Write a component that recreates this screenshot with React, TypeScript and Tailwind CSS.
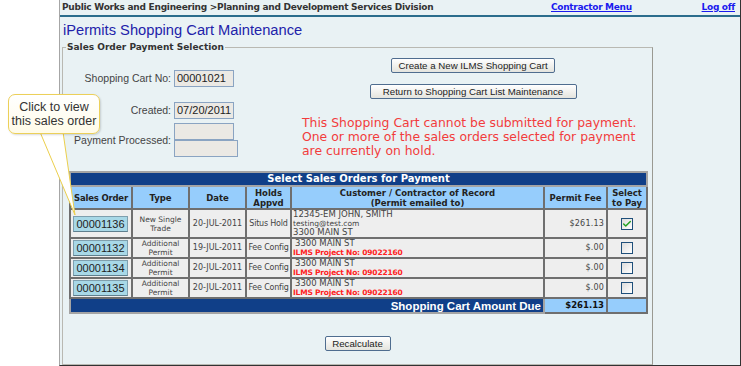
import { Check } from 'lucide-react'

// rows of the sales order table
const orders = [
  {
    id: '00001136',
    type: ['New Single', 'Trade'],
    date: '20-JUL-2011',
    hold: 'Situs Hold',
    fee: '$261.13',
    checked: true,
    first: true,
  },
  { id: '00001132', type: ['Additional', 'Permit'], date: '19-JUL-2011', hold: 'Fee Config', fee: '$.00', checked: false },
  { id: '00001134', type: ['Additional', 'Permit'], date: '20-JUL-2011', hold: 'Fee Config', fee: '$.00', checked: false },
  { id: '00001135', type: ['Additional', 'Permit'], date: '20-JUL-2011', hold: 'Fee Config', fee: '$.00', checked: false },
]

function Field({ value, w = 'w-[60px]' }: { value?: string; w?: string }) {
  return (
    <div
      className={`${w} h-[17px] border border-[#8aa4c2] bg-[#ebe9e4] px-[2px] text-[11px] leading-[15px] text-[#222]`}>
      {value}
    </div>
  )
}

function Btn({ children, w }: { children: React.ReactNode; w: string }) {
  return (
    <button
      className={`${w} block h-[15px] rounded-[2px] border border-[#4f6d8f] bg-gradient-to-b from-white to-[#e4e4de] text-[9.7px] leading-[13px] text-[#222]`}>
      {children}
    </button>
  )
}

function Box({ checked }: { checked: boolean }) {
  return (
    <span className="mx-auto flex h-[12px] w-[12px] items-center justify-center border border-[#1f4f7a] bg-gradient-to-br from-[#dcdcdc] to-white">
      {checked && <Check className="h-[10px] w-[10px] text-[#21a121]" strokeWidth={3.5} />}
    </span>
  )
}

export default function App() {
  const cell = 'border-2 border-[#6f6f6f]'
  return (
    <div className="relative flex h-[366px] w-[741px] overflow-hidden bg-white font-['Liberation_Sans',Arial,sans-serif] text-[#333]">
      <div className="w-[59px] shrink-0" />

      <div className="flex min-w-0 flex-1 flex-col border-b border-l border-r border-b-[#333] border-l-[#a6a6a6] border-r-[#333] bg-[#e9f2f4]">
        {/* top strip */}
        <div className="flex h-[17px] shrink-0 items-center border-b-2 border-[#2b6d8c] pl-[2px] pr-[5px] font-['DejaVu_Sans',sans-serif] text-[9px] font-bold">
          <span className="w-[489px] tracking-[-0.25px] text-[#333]">
            Public Works and Engineering &gt;Planning and Development Services Division
          </span>
          <a href="#" className="tracking-[-0.3px] text-[#1a1aee] underline">
            Contractor Menu
          </a>
          <a href="#" className="ml-auto tracking-[-0.3px] text-[#1a1aee] underline">
            Log off
          </a>
        </div>

        <h1 className="mt-[3px] h-[20px] shrink-0 pl-[3px] text-[14.7px] leading-[20px] text-[#2222aa]">
          iPermits Shopping Cart Maintenance
        </h1>

        <fieldset className="ml-[2px] mt-[2px] min-h-0 w-[591px] flex-1 border border-[#b9b9b2] border-r-[#9a9a92]">
          <legend className="ml-[3px] px-[1px] font-['DejaVu_Sans',sans-serif] text-[9px] font-bold leading-[10px] text-[#333]">
            Sales Order Payment Selection
          </legend>

          <div className="flex">
            {/* left form */}
            <div className="w-[237px] shrink-0 text-[10.5px] text-[#444]">
              <div className="mt-[18px] flex h-[17px] items-center">
                <span className="w-[108px] text-right">Shopping Cart No:</span>
                <div className="ml-[3px]">
                  <Field value="00001021" />
                </div>
              </div>
              <div className="mt-[15px] flex h-[17px] items-center">
                <span className="w-[108px] text-right">Created:</span>
                <div className="ml-[3px]">
                  <Field value="07/20/2011" />
                </div>
              </div>
              <div className="mt-[4px] flex items-center">
                <span className="mt-[2px] w-[108px] text-right">Payment Processed:</span>
                <div className="ml-[3px] flex flex-col">
                  <Field />
                  <Field w="w-[64px]" />
                </div>
              </div>
            </div>

            {/* right side buttons + message */}
            <div className="flex flex-1 flex-col items-center pr-[6px]">
              <div className="mt-[6px] flex">
                <Btn w="w-[164px]">Create a New ILMS Shopping Cart</Btn>
              </div>
              <div className="mt-[11px] flex">
                <Btn w="w-[207px]">Return to Shopping Cart List Maintenance</Btn>
              </div>
              <p className="ml-[2px] mt-[17px] self-start whitespace-nowrap font-['DejaVu_Sans',sans-serif] text-[12.4px] leading-[14px] text-[#f23c3c]">
                This Shopping Cart cannot be submitted for payment.
                <br />
                One or more of the sales orders selected for payment
                <br />
                are currently on hold.
              </p>
            </div>
          </div>

          {/* orders table */}
          <table className="ml-[6px] mt-[13px] w-[577px] table-fixed border-collapse font-['DejaVu_Sans',sans-serif]">
            <colgroup>
              <col className="w-[62px]" />
              <col className="w-[57px]" />
              <col className="w-[57px]" />
              <col className="w-[45px]" />
              <col className="w-[253px]" />
              <col className="w-[63px]" />
              <col className="w-[40px]" />
            </colgroup>
            <thead>
              <tr className="h-[14px]">
                <th
                  colSpan={7}
                  className="border-2 border-[#a4a4a4] bg-[#103f88] text-center text-[10px] font-bold leading-[12px] text-white">
                  Select Sales Orders for Payment
                </th>
              </tr>
              <tr className="h-[23px] bg-[#96cdfc] text-[8.5px] font-bold leading-[10px] text-[#222]">
                <th className={`${cell} whitespace-nowrap tracking-[-0.2px]`}>Sales Order</th>
                <th className={cell}>Type</th>
                <th className={cell}>Date</th>
                <th className={cell}>
                  Holds
                  <br />
                  Appvd
                </th>
                <th className={cell}>
                  Customer / Contractor of Record
                  <br />
                  (Permit emailed to)
                </th>
                <th className={cell}>Permit Fee</th>
                <th className={cell}>
                  Select
                  <br />
                  to Pay
                </th>
              </tr>
            </thead>
            <tbody className="bg-[#eeeeee] text-[8px] text-[#444]">
              {orders.map((o) => (
                <tr key={o.id} className={o.first ? 'h-[29px]' : 'h-[20px]'}>
                  <td className={`${cell} px-[2px]`}>
                    <button className="block h-[16px] w-[55px] border border-[#7f9fae] border-b-[#5f7f8e] bg-[#a8d8e7] font-['Liberation_Sans',Arial,sans-serif] text-[11px] leading-[14px] text-[#222]">
                      {o.id}
                    </button>
                  </td>
                  <td className={`${cell} text-center text-[7.5px] leading-[9px]`}>
                    {o.type[0]}
                    <br />
                    {o.type[1]}
                  </td>
                  <td className={`${cell} whitespace-nowrap text-center`}>{o.date}</td>
                  <td className={`${cell} whitespace-nowrap text-center tracking-[-0.2px]`}>{o.hold}</td>
                  <td className={`${cell} pl-[1px] leading-[9px]`}>
                    {o.first ? (
                      <>
                        <div className="text-[8.5px]">12345-EM JOHN, SMITH</div>
                        <div className="text-[7.5px]">testing@test.com</div>
                        <div className="text-[8.5px]">3300 MAIN ST</div>
                      </>
                    ) : (
                      <>
                        <div className="pl-[2px] text-[8.5px]">3300 MAIN ST</div>
                        <div className="text-[7.5px] font-bold tracking-[-0.2px] text-[#f22]">
                          ILMS Project No: 09022160
                        </div>
                      </>
                    )}
                  </td>
                  <td className={`${cell} pr-[2px] text-right text-[8px] tracking-[0.2px]`}>{o.fee}</td>
                  <td className={cell}>
                    <Box checked={o.checked} />
                  </td>
                </tr>
              ))}
              <tr className="h-[15px]">
                <td
                  colSpan={5}
                  className="border-2 border-[#a4a4a4] bg-[#103f88] pr-[2px] text-right font-['Liberation_Sans',Arial,sans-serif] text-[11.5px] font-bold leading-[12px] text-white">
                  Shopping Cart Amount Due
                </td>
                <td className={`${cell} bg-[#96cdfc] pr-[2px] text-right text-[8.5px] font-bold text-[#111]`}>
                  $261.13
                </td>
                <td className={`${cell} bg-[#96cdfc]`} />
              </tr>
            </tbody>
          </table>

          <div className="mt-[22px] flex justify-center">
            <Btn w="w-[66px]">Recalculate</Btn>
          </div>
        </fieldset>
      </div>

      {/* callout over the page */}
      <div className="absolute left-[8px] top-[94px]">
        <svg className="absolute left-0 top-0 overflow-visible" width="100" height="125" viewBox="0 0 100 125">
          <polygon points="32,38 55,38 67,121" fill="#ffffff" stroke="#eccf4c" strokeWidth="1" />
        </svg>
        <div className="relative flex h-[40px] w-[92px] flex-col items-center justify-center rounded-[7px] border border-[#ecd059] bg-gradient-to-b from-white to-[#fffbe8] text-[12.5px] leading-[14px] text-[#333] shadow-[1px_1px_2px_rgba(0,0,0,0.15)]">
          <span>Click to view</span>
          <span>this sales order</span>
        </div>
      </div>
    </div>
  )
}
